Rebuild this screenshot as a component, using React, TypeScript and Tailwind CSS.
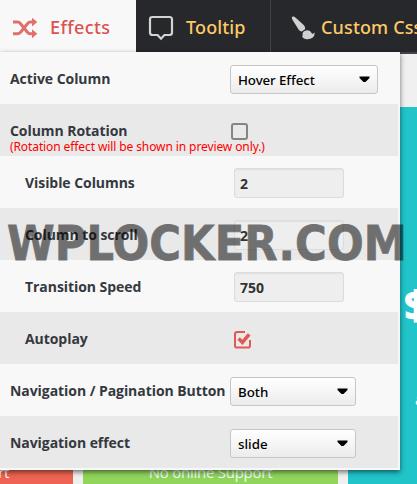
import React from "react";

const openSans = "font-['Open_Sans','Noto_Sans',sans-serif]";
const notoSans = "font-['Noto_Sans','Open_Sans',sans-serif]";

function ShuffleIcon() {
  return (
    <svg width="26" height="22" viewBox="0 0 26 22" className="block">
      <g fill="none" stroke="#e0706b" strokeWidth="3">
        <path d="M1 5h4.600q1.600 0 3 1.700l6.800 8.600q1.200 1.500 3 1.500h2.600" />
        <path d="M1 16.800h4.600q1.600 0 3-1.600l6.800-8.500q1.400-1.700 3-1.700h2.600" />
      </g>
      <path d="M20 .800l5.300 4.200-5.300 4.600zM20 12.300l5.300 4.500-5.300 4.500z" fill="#e0706b" />
    </svg>
  );
}

function BubbleIcon() {
  return (
    <svg width="26" height="26" viewBox="0 0 26 26" className="block">
      <path
        d="M4.400 2h17.200Q24 2 24 4.400v13.200Q24 20 21.600 20h-5.200L13 23.700 9.600 20H4.400Q2 20 2 17.600V4.400Q2 2 4.400 2z"
        fill="none"
        stroke="#d2d3d3"
        strokeWidth="2.200"
      />
    </svg>
  );
}

function BrushIcon() {
  return (
    <svg width="24" height="24" viewBox="0 0 24 24" className="block">
      <g fill="#d0d0d0">
        <path d="M1.200 .700Q2.500-.200 4.400 1.400L12.700 9.100Q14.600 11 14 13.200L10.800 15.600Q8.900 15.500 7.900 14.100L1.600 3.900Q.300 1.800 1.200 .700z" />
        <path d="M11.500 18.200Q11.500 14.600 16.200 14.200 19.400 14.100 20.600 16.900 21.500 18.800 23.500 16.400 24.200 19.100 21.500 21.800 19.300 23.500 15.500 23.200 12.500 23 11 20.800 12 20.400 11.500 18.200z" />
      </g>
    </svg>
  );
}

function CheckedIcon() {
  return (
    <svg width="17" height="18" viewBox="0 0 17 18" className="block">
      <path
        d="M11 1H3.200Q1 1 1 3.200v11.200Q1 16.600 3.200 16.600h10.600Q16 16.600 16 14.400V9"
        fill="none"
        stroke="#df5a53"
        strokeWidth="2"
      />
      <path d="M4.600 7.600l3.800 3.800L15.200 3.400" fill="none" stroke="#df5a53" strokeWidth="3.500" />
    </svg>
  );
}

function Select({ value, wide }: { value: string; wide?: boolean }) {
  return (
    <div
      className={`flex h-[29px] items-center justify-between rounded-[3px] border border-[#c6c6c6] bg-linear-to-b from-white to-[#ececec] pr-[7px] pl-[7px] ${notoSans} text-[13.3px] font-medium text-black ${wide ? "w-[148px] tracking-[-0.08px]" : "w-[126px]"}`}
    >
      <span className="pt-[2px]">{value}</span>
      <svg width="11" height="7" viewBox="0 0 11 7" className="-mt-px">
        <path d="M.500 .500h10v1.500L6.500 6h-2l-4-4z" />
      </svg>
    </div>
  );
}

function Field({ value }: { value: string }) {
  return (
    <div className={`ml-1 flex h-[30px] w-[110px] items-center rounded-[3px] border border-[#dcdcdc] bg-[#eeeeee] px-[5px] ${openSans} text-[14px] font-bold text-[#333] shadow-[inset_0_1px_1px_#e0e0e0]`}>
      {value}
    </div>
  );
}

function Row({ label, shaded, indent, children }: { label: string; shaded?: boolean; indent?: boolean; children: React.ReactNode }) {
  return (
    <div className={`flex h-[52px] w-[398px] items-center ${shaded ? "bg-[#e9e9e9]" : "bg-[#f8f8f8]"}`}>
      <div className={`w-[230px] shrink-0 whitespace-nowrap ${indent ? "pl-[25px]" : "pl-[10px]"} pt-px ${openSans} text-[14px] leading-5 font-bold tracking-[-0.06px] text-[#35383e]`}>
        {label}
      </div>
      {children}
    </div>
  );
}

export default function App() {
  return (
    <div className={`relative h-[484px] w-[417px] overflow-hidden bg-[#f0f0f0] ${openSans}`}>
      <nav className={`flex h-[54px] border-b-2 border-[#444547] bg-[#26282c] ${notoSans} text-[18px] font-medium whitespace-nowrap`}>
        <div className="flex h-[52px] w-[136px] shrink-0 items-center bg-[#f8f8f8] pt-[3px] pl-[12px] text-[#d9534f]">
          <ShuffleIcon />
          <span className="ml-3 tracking-[0.4px]">Effects</span>
        </div>
        <div className="flex h-[52px] w-[135px] shrink-0 items-center border-r border-[#424346] pt-[3px] pl-[12px] text-[#ffc966]">
          <BubbleIcon />
          <span className="ml-[12px] tracking-[0.15px]">Tooltip</span>
        </div>
        <div className="flex h-[52px] shrink-0 items-center pt-[3px] pl-[20px] text-[#ffc966]">
          <BrushIcon />
          <span className="ml-[6px] tracking-[0.15px]">Custom Css</span>
        </div>
      </nav>

      <div className="flex h-[377px] gap-[10px]">
        <div className="mt-[53px] h-[377px] w-[73px] shrink-0 bg-[#ee6352] pt-[353px] text-[15px] leading-6 tracking-[-0.25px] whitespace-nowrap text-white">
          <div className="flex w-[9px] justify-end">Support</div>
        </div>
        <div className="mt-[53px] h-[377px] w-[255px] shrink-0 bg-[#91d65b] pt-[353px] text-center text-[15px] leading-6 tracking-[-0.25px] text-[#f0fbfb]">
          No online Support
        </div>
        <div className="mt-[53px] h-[377px] w-[100px] shrink-0 bg-[#20c4c9] pt-[170px] pl-[56px] text-white">
          <div className="text-[40px] leading-[56px] font-extrabold">$</div>
          <div className="pt-[54px] pl-[11px] text-[15px] leading-6">a</div>
        </div>
      </div>

      <main className="absolute top-[52px] left-0 h-[418px] w-[400px] bg-[#f8f8f8] shadow-[0_2px_5px_rgba(0,0,0,0.55)]">
        <Row label="Active Column">
          <div className="pt-[3px]"><Select value="Hover Effect" wide /></div>
        </Row>
        <div className="relative">
          <Row label="Column Rotation" shaded>
            <div className="mt-[3px] ml-px h-[17px] w-[17px] rounded-[3px] border-2 border-[#858585]" />
          </Row>
          <div className={`absolute top-[35px] left-[10px] ${notoSans} text-[12px] leading-4 tracking-[-0.1px] whitespace-nowrap text-[#f00]`}>
            (Rotation effect will be shown in preview only.)
          </div>
        </div>
        <Row label="Visible Columns" indent>
          <div className="pt-[2px]"><Field value="2" /></div>
        </Row>
        <Row label="Column to scroll" indent shaded>
          <div className="pt-[2px]"><Field value="2" /></div>
        </Row>
        <Row label="Transition Speed" indent>
          <div className="pt-[2px]"><Field value="750" /></div>
        </Row>
        <Row label="Autoplay" indent shaded>
          <div className="pt-[4px] pl-[4px]"><CheckedIcon /></div>
        </Row>
        <Row label="Navigation / Pagination Button">
          <div className="pt-[3px]"><Select value="Both" /></div>
        </Row>
        <Row label="Navigation effect" shaded>
          <div className="pt-[3px]"><Select value="slide" /></div>
        </Row>
      </main>

      <div className="absolute top-[215px] left-[7px] font-['DejaVu_Sans_Condensed','DejaVu_Sans',sans-serif] text-[48px] leading-[56px] font-bold tracking-[0.12px] whitespace-nowrap text-black opacity-52 [-webkit-text-stroke:0.8px_black] [font-stretch:condensed]">
        WPLOCKER.COM
      </div>
    </div>
  );
}
